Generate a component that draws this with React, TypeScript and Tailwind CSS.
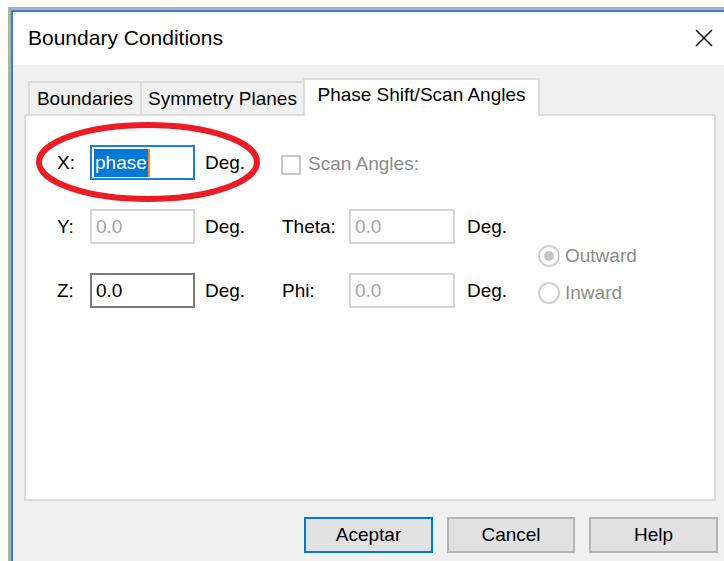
import React from "react";

const font = "font-['Liberation_Sans',Arial,sans-serif]";

function TextBox({
  value,
  tone,
  width = "w-[105px]",
}: {
  value: string;
  tone: "off" | "on";
  width?: string;
}) {
  return (
    <div
      className={`${width} h-[35px] flex items-center pl-[4px] bg-white border-2 ${
        tone === "on" ? "border-[#7a7a7a] text-black" : "border-[#d6d6d6] text-[#a3a3a3]"
      }`}
    >
      {value}
    </div>
  );
}

function Radio({ label, checked }: { label: string; checked?: boolean }) {
  return (
    <div className="flex items-center h-[24px] text-[#8c8c8c]">
      <span className="w-[22px] h-[22px] rounded-full border-2 border-[#cfcfcf] bg-white flex items-center justify-center">
        {checked && <span className="w-[10px] h-[10px] rounded-full bg-[#c6c6c6]" />}
      </span>
      <span className="ml-[5px]">{label}</span>
    </div>
  );
}

export default function App() {
  return (
    <div className={`relative w-[724px] h-[561px] overflow-hidden bg-white ${font} text-[19px] leading-[22px] text-black`}>
      {/* dialog window frame */}
      <div className="ml-[8px] mt-[7px] w-[740px] border-t-[3px] border-l-[3px] border-[#b0b0b0]">
        <div className="border-t-2 border-l-2 border-[#2b88d8]">
          {/* title bar */}
          <div className="h-[53px] bg-white flex items-center pl-[15px] pr-[35px] pb-[2px]">
            <span className="text-[21px] leading-[24px]">Boundary Conditions</span>
            <svg className="ml-auto" width="18" height="18" viewBox="0 0 18 18">
              <path d="M1 1 L17 17 M17 1 L1 17" stroke="#111" strokeWidth="1.6" />
            </svg>
          </div>

          {/* dialog body */}
          <div className="bg-[#f0f0f0] h-[600px] pl-[11px] pt-[13px]">
            <div className="relative z-10 flex items-end h-[36px] ml-[4px]">
              <div className="w-[114px] h-[33px] border-2 border-b-0 border-[#dcdcdc] text-center pt-[5px]">
                Boundaries
              </div>
              <div className="w-[161px] h-[33px] border-t-2 border-[#dcdcdc] text-center pt-[5px]">
                Symmetry Planes
              </div>
              <div className="w-[237px] h-[38px] -mb-[2px] bg-white border-2 border-b-0 border-[#dcdcdc] text-center pt-[4px]">
                Phase Shift/Scan Angles
              </div>
            </div>

            <div className="w-[692px] h-[387px] bg-white border-2 border-[#dcdcdc] pt-[29px] pl-[31px] flex">
              <div className="flex flex-col gap-[29px]">
                {/* X row */}
                <div className="flex items-center h-[35px]">
                  <span className="w-[33px]">X:</span>
                  <div className="w-[105px] h-[35px] flex items-center pl-[2px] bg-white border-2 border-[#1a7fd9]">
                    <span className="h-[28px] flex items-center bg-[#0078d7] text-white px-[1px]">phase</span>
                    <span className="w-[2px] h-[28px] bg-[#f28c28]" />
                  </div>
                  <span className="ml-[10px] w-[76px]">Deg.</span>
                  <span className="w-[20px] h-[20px] mt-[4px] border-2 border-[#c8c8c8] bg-white" />
                  <span className="ml-[7px] mt-[2px] text-[#8c8c8c]">Scan Angles:</span>
                </div>

                {/* Y row */}
                <div className="flex items-center h-[35px]">
                  <span className="w-[33px]">Y:</span>
                  <TextBox value="0.0" tone="off" />
                  <span className="ml-[10px] w-[77px]">Deg.</span>
                  <span className="w-[67px]">Theta:</span>
                  <TextBox value="0.0" tone="off" width="w-[106px]" />
                  <span className="ml-[12px] w-[72px]">Deg.</span>
                </div>

                {/* Z row */}
                <div className="flex items-center h-[35px]">
                  <span className="w-[33px]">Z:</span>
                  <TextBox value="0.0" tone="on" />
                  <span className="ml-[10px] w-[77px]">Deg.</span>
                  <span className="w-[67px]">Phi:</span>
                  <TextBox value="0.0" tone="off" width="w-[106px]" />
                  <span className="ml-[12px] w-[72px]">Deg.</span>
                </div>
              </div>

              <div className="flex flex-col gap-[13px] pt-[99px] -ml-[1px]">
                <Radio label="Outward" checked />
                <Radio label="Inward" />
              </div>
            </div>

            <div className="flex gap-[14px] ml-[280px] mt-[16px]">
              <button className="w-[129px] h-[36px] bg-[#e1e1e1] border-2 border-[#0078d7]">Aceptar</button>
              <button className="w-[128px] h-[36px] bg-[#e1e1e1] border-2 border-[#b4b4b4]">Cancel</button>
              <button className="w-[129px] h-[36px] bg-[#e1e1e1] border-2 border-[#b4b4b4]">Help</button>
            </div>
          </div>
        </div>
      </div>

      {/* red marker ring around the X field */}
      <svg className="absolute left-[30px] top-[116px] pointer-events-none" width="236" height="92" viewBox="0 0 236 92">
        <ellipse cx="118" cy="46" rx="109" ry="37" fill="none" stroke="#ed1c24" strokeWidth="6" />
      </svg>
    </div>
  );
}
